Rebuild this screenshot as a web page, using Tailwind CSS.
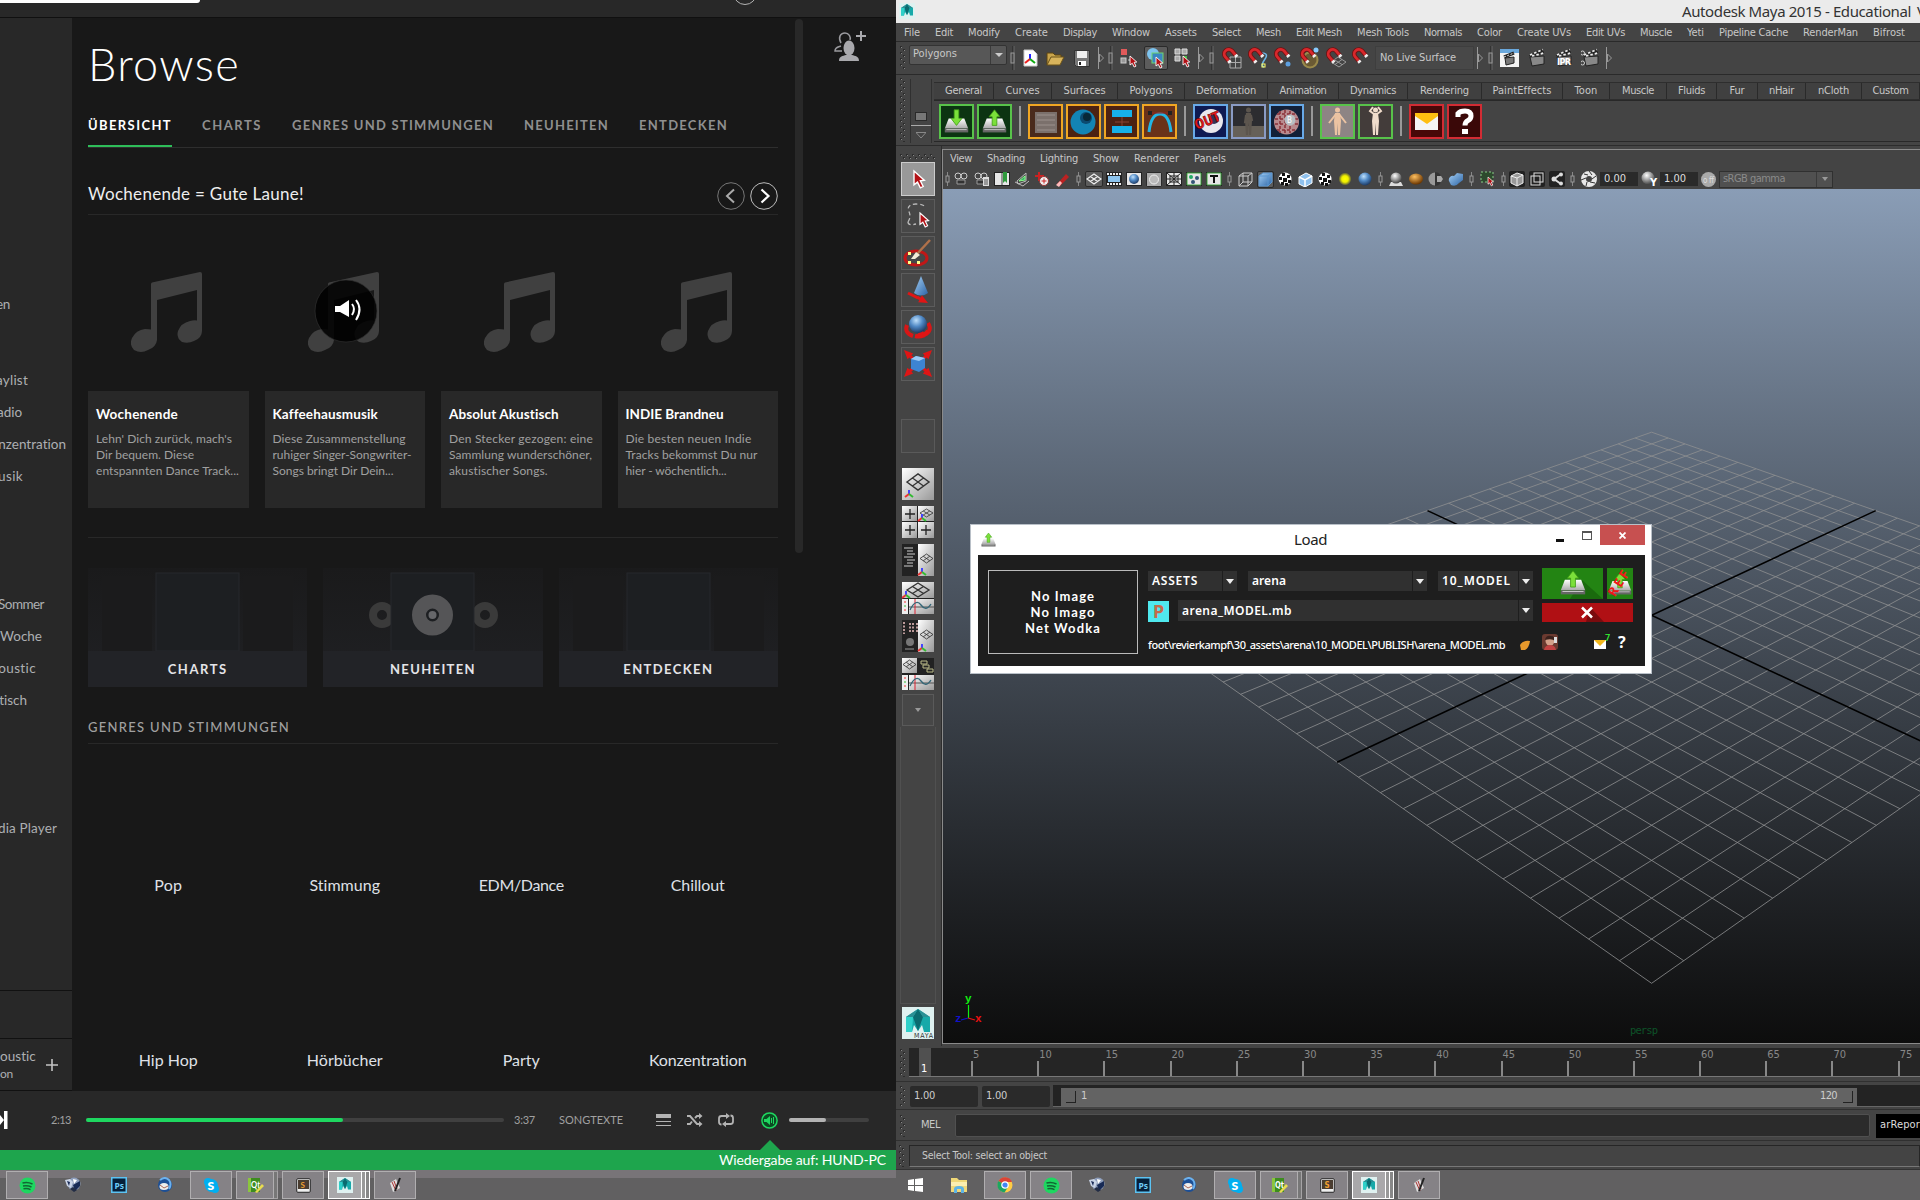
<!DOCTYPE html>
<html lang="de">
<head>
<meta charset="utf-8">
<title>Desktop</title>
<script src="https://cdn.jsdelivr.net/npm/@tailwindcss/browser@4"></script>
</head>
<body class="w-[1920px] h-[1200px] overflow-hidden bg-[#181818] flex whitespace-nowrap">

<!-- music player -->
<div class="w-[896px] h-[1200px] flex flex-col shrink-0 overflow-hidden font-['Lato',sans-serif] text-[#dfe0e6]">
  <header class="h-[18px] shrink-0 bg-[#282828] border-b border-[#101010] flex items-start overflow-hidden">
    <div class="w-[200px] h-[3px] bg-white rounded-br-lg"></div>
    <div class="ml-[533px] -mt-[19px] size-6 rounded-full border border-[#b3b3b3] shrink-0"></div>
  </header>
  <div class="h-[1073px] flex shrink-0">
    <aside class="w-[72px] bg-[#282828] flex flex-col text-[13.5px] text-[#adafb2] leading-8 overflow-hidden shrink-0">
      <div class="mt-[270px] w-[10px] flex justify-end"><span data-w="14">en</span></div>
      <div class="mt-[44px] w-[28px] flex justify-end"><span data-w="32">aylist</span></div>
      <div class="w-[22px] flex justify-end"><span data-w="25">adio</span></div>
      <div class="w-[66px] flex justify-end"><span data-w="68">nzentration</span></div>
      <div class="w-[23px] flex justify-end"><span data-w="25">usik</span></div>
      <div class="mt-[96px] w-[44px] flex justify-end"><span data-w="46">Sommer</span></div>
      <div class="w-[42px] flex justify-end"><span data-w="42">Woche</span></div>
      <div class="w-[36px] flex justify-end"><span data-w="38">oustic</span></div>
      <div class="w-[27px] flex justify-end"><span data-w="28">tisch</span></div>
      <div class="mt-[96px] w-[57px] flex justify-end"><span data-w="59">dia Player</span></div>
      <div class="mt-[146px] h-[48px] border-t border-[#111] shrink-0"></div>
      <div class="h-[53px] border-y border-[#111] flex items-center shrink-0">
        <div class="w-[36px] flex flex-col items-start leading-[17px]"><span data-w="36">oustic</span><span class="text-xs leading-[17px]" data-w="13">on</span></div>
        <svg class="size-3 ml-[10px]" viewBox="0 0 12 12"><path d="M6 0v12M0 6h12" stroke="#c4c4c4" stroke-width="1.6"/></svg>
      </div>
    </aside>
    <main class="w-[723px] pl-4 shrink-0">
      <h1 class="mt-[18px] h-[57px] leading-[57px] text-[45px] text-white"><span class="font-light" data-w="152">Browse</span></h1>
      <nav class="mt-[20px] h-[35px] w-[690px] border-b border-[#2e2e2e] flex gap-[30px] text-[13px] font-bold text-[#8f8f8f]">
        <div class="h-[34px] border-b-2 border-[#2ebd59] text-white leading-6 w-[84px]"><span data-w="84">ÜBERSICHT</span></div>
        <div class="leading-6 w-[60px]"><span data-w="60">CHARTS</span></div>
        <div class="leading-6 w-[202px]"><span data-w="202">GENRES UND STIMMUNGEN</span></div>
        <div class="leading-6 w-[85px]"><span data-w="85">NEUHEITEN</span></div>
        <div class="leading-6"><span data-w="89">ENTDECKEN</span></div>
      </nav>
      <div class="h-[67px] w-[690px] border-b border-[#282828] flex items-center gap-[5px] pt-[29px]">
        <div class="mr-auto text-[17px] leading-6 -mt-[3px] text-[#eee]"><span data-w="216">Wochenende = Gute Laune!</span></div>
        <svg class="size-7" viewBox="0 0 28 28" fill="none"><circle cx="14" cy="14" r="13.3" stroke="#777"/><path d="M17 7.500l-7 6.500 7 6.500" stroke="#aaa" stroke-width="2"/></svg>
        <svg class="size-7" viewBox="0 0 28 28" fill="none"><circle cx="14" cy="14" r="13.3" stroke="#bbb"/><path d="M11.500 7.500l7 6.500-7 6.500" stroke="#fff" stroke-width="2.200"/></svg>
      </div>
      <div id="albums" class="mt-4 h-[307px] w-[690px] border-b border-[#282828] grid grid-cols-4 gap-x-4"></div>
      <div class="mt-[30px] w-[690px] h-[119px] grid grid-cols-3 gap-4 text-[13px] font-bold text-[#e4e4e8]" id="tiles"></div>
      <div class="mt-[28px] h-[29px] w-[690px] border-b border-[#282828] text-[13px] font-medium text-[#a0a0a0] leading-6"><span data-w="202">GENRES UND STIMMUNGEN</span></div>
      <div class="w-[690px] grid grid-cols-4 gap-x-4 text-base text-center text-[#dfe0e6]">
        <div class="h-[175px] pt-[129px]"><span data-w="28">Pop</span></div>
        <div class="h-[175px] pt-[129px]"><span data-w="71">Stimmung</span></div>
        <div class="h-[175px] pt-[129px]"><span data-w="85">EDM/Dance</span></div>
        <div class="h-[175px] pt-[129px]"><span data-w="54">Chillout</span></div>
        <div class="pt-[129px]"><span data-w="59">Hip Hop</span></div>
        <div class="pt-[129px]"><span data-w="76">Hörbücher</span></div>
        <div class="pt-[129px]"><span data-w="37">Party</span></div>
        <div class="pt-[129px]"><span data-w="98">Konzentration</span></div>
      </div>
    </main>
    <div class="w-2 h-[534px] mt-px bg-[#282828] rounded-full shrink-0"></div>
    <svg class="mt-3 ml-[30px] w-[34px] h-[32px]" viewBox="0 0 34 32"><path d="M8 13C5 8 7 3 12 3c4 0 6 4 5 7" fill="none" stroke="#9a9a9e" stroke-width="1.500"/><path d="M8 16c-3 1-6 1-6 5h7" fill="none" stroke="#9a9a9e" stroke-width="1.500"/><ellipse cx="16" cy="18" rx="5.500" ry="7.500" fill="#a9a9ad"/><path d="M6 31c0-5 4-5 7-6h6c3 1 7 1 7 6z" fill="#a9a9ad"/><path d="M28 1v10M23 6h10" stroke="#a9a9ad" stroke-width="2"/></svg>
  </div>
  <footer class="h-[59px] pb-px bg-[#282828] shrink-0 flex items-center text-xs text-[#a0a0a0]">
    <svg class="w-2 h-[18px]" viewBox="0 0 8 18"><path d="M0 4l4 5-4 5zM4 0h3.500v18H4z" fill="#fff"/></svg>
    <div class="ml-[43px] w-[35px] text-[#a0a0a0] text-[11px]"><span data-w="20">2:13</span></div>
    <div class="w-[418px] h-1 rounded-full bg-[#404040]"><div class="w-[257px] h-1 rounded-full bg-[#1ed760]"></div></div>
    <div class="ml-[10px] w-[45px] text-[11px]"><span data-w="21">3:37</span></div>
    <div class="w-[97px] text-[11px]"><span data-w="64">SONGTEXTE</span></div>
    <svg class="w-[15px] h-3" viewBox="0 0 15 12"><path d="M0 2h15" stroke="#b3b3b3" stroke-width="4"/><path d="M0 7.500h15M0 11.500h15" stroke="#b3b3b3"/></svg>
    <svg class="ml-4 w-[16px] h-[14px]" viewBox="0 0 16 14" fill="none"><path d="M0 3h3l7 8h4M0 11h3l2-2.500M8 5l2-2h4" stroke="#b3b3b3" stroke-width="2"/><path d="M12 0l3.500 3L12 6zM12 8l3.500 3-3.500 3z" fill="#b3b3b3"/></svg>
    <svg class="ml-[15px] w-[16px] h-[14px]" viewBox="0 0 16 14" fill="none"><path d="M3.500 11.500Q1 11.500 1 9V5.500Q1 3 3.500 3H9M12.500 2.500Q15 2.500 15 5v3.500Q15 11 12.500 11H7" stroke="#b3b3b3" stroke-width="1.800"/><path d="M8 0l4 3-4 3zM8 8l-4 3 4 3z" fill="#b3b3b3"/></svg>
    <svg class="ml-[27px] size-[17px]" viewBox="0 0 17 17" fill="none"><circle cx="8.500" cy="8.500" r="7.600" fill="#0c4a22" stroke="#1ed760" stroke-width="1.500"/><path d="M3 7h2.500L9 4v9L5.500 10H3z" fill="#1ed760"/><path d="M10.500 6v5M12.500 5v7" stroke="#1ed760"/></svg>
    <div class="ml-[11px] w-[80px] h-1 rounded-full bg-[#404040]"><div class="w-[37px] h-1 rounded-full bg-[#b3b3b3]"></div></div>
  </footer>
  <div class="relative h-5 bg-[#1ea54d] shrink-0 flex justify-end items-center pr-[10px] text-sm text-white">
    <svg class="absolute left-[760px] -top-[10px] w-5 h-[10px]" viewBox="0 0 20 10"><path d="M0 10L10 0l10 10z" fill="#1ea54d"/></svg>
    <span class="leading-5" data-w="167">Wiedergabe auf: HUND-PC</span>
  </div>
  <div class="h-[30px] shrink-0 bg-[#616061]">
    <div class="h-[30px] bg-linear-to-b from-[#787478] from-[27%] to-[#616061] to-[27%] flex items-start pt-px pl-[6px] gap-1" id="task-left"></div>
  </div>
</div>

<!-- 3D application -->
<div class="w-[1024px] h-[1200px] flex flex-col shrink-0 overflow-hidden bg-[#444] font-['DejaVu_Sans_Condensed','DejaVu_Sans',sans-serif] text-[11px] text-[#c8c8c8]">
  <div class="h-[23px] bg-[#ebebeb] flex items-center shrink-0">
    <svg class="ml-[3px] w-4 h-4 -mt-px shrink-0" viewBox="0 0 32 32"><use href="#maya"/></svg>
    <div class="ml-[767px] text-[15px] text-[#333] font-['Noto_Sans',sans-serif] flex gap-[6px]"><span class="shrink-0" data-w="229">Autodesk Maya 2015 - Educational</span><span>V</span></div>
  </div>
  <div id="menu" class="h-[19px] border-b border-[#2a2a2a] flex items-center gap-[15px] pl-2 pt-[2px] shrink-0"></div>
  <div class="h-[33px] border-b border-[#2a2a2a] flex items-center shrink-0">
    <div class="w-[13px] flex justify-center"><svg class="w-[6px] h-6"><use href="#grip"/></svg></div>
    <div class="-mt-[7px] w-[98px] h-5 bg-[#575757] border border-[#333] rounded-xs flex items-center"><span class="ml-[3px]" data-w="44">Polygons</span><span class="ml-auto w-4 h-[18px] border-l border-[#3a3a3a] flex items-center justify-center"><svg class="w-2 h-1"><path d="M0 0h8L4 4z" fill="#ccc"/></svg></span></div>
    <div id="status-a" class="flex items-center h-8"></div>
    <div class="w-[99px] h-6 bg-[#484848] border border-[#3e3e3e] flex items-center pl-1"><span data-w="76">No Live Surface</span></div>
    <div id="status-b" class="flex items-center h-8"></div>
  </div>
  <div class="h-[71px] border-b border-[#2c2c2c] flex shrink-0">
    <div class="w-[14px] shrink-0 flex justify-center pt-[3px]"><svg class="w-[6px] h-[64px]"><use href="#grip"/></svg></div>
    <div class="w-[22px] shrink-0 mt-1 h-[64px] border-x border-[#303030] flex flex-col items-center"><div class="mt-[33px] w-3 h-[9px] bg-[#777] border border-[#2a2a2a]"></div><div class="mt-1 w-5 h-px bg-[#aaa]"></div><svg class="mt-[6px] w-[10px] h-[6px]"><path d="M0 .5h10L5 6z" fill="none" stroke="#888"/></svg></div>
    <div class="flex flex-col w-[986px] ml-[2px] shrink-0">
      <div id="shelf-tabs" class="mt-[7px] h-[18px] flex border-y border-[#2e2e2e] bg-[#404040] w-[986px] overflow-hidden"></div>
      <div id="shelf" class="h-[42px] border-y border-[#282828] flex items-center gap-[3px] pl-[5px]"></div>
    </div>
  </div>
  <div class="h-[900px] flex shrink-0">
    <div class="w-[46px] border-r border-[#2d2d2d] flex flex-col items-center pr-px shrink-0">
      <svg class="mt-2 w-[36px] h-[6px] shrink-0"><use href="#griph"/></svg>
      <div id="tools" class="mt-[2px] flex flex-col gap-[3px]"></div>
      <div class="mt-[38px] size-[34px] border border-[#5a5a5a] bg-[#474747]"></div>
      <div id="layouts" class="mt-[15px] flex flex-col gap-[6px]"></div>
      <div class="mt-1 w-[32px] h-[32px] border border-[#5a5a5a] bg-[#474747] flex items-center justify-center"><svg class="w-[6px] h-1"><path d="M0 0h6L3 4z" fill="#999"/></svg></div>
      <div class="mt-px w-[36px] h-[277px] border border-[#505050] border-t-0"></div>
      <svg class="mt-[3px] size-8 shrink-0" viewBox="0 0 32 32"><use href="#maya"/><text x="12" y="31" font-size="7" textLength="19" fill="#333">MAYA</text></svg>
    </div>
    <div class="mt-[3px] w-[978px] h-[895px] border-l border-t border-b border-[#8a8a8a] flex flex-col shrink-0 overflow-hidden">
      <div id="panel-menu" class="h-[19px] flex items-center gap-[15px] pl-[7px] shrink-0"></div>
      <div id="panel-bar" class="h-[20px] flex items-center shrink-0"></div>
      <div class="relative flex-1 bg-linear-to-b from-[#8a9db6] to-[#0d0d0d]">
        <svg id="viewport" class="block" width="977" height="854" viewBox="943 189 977 854"></svg>

        <!-- floating load dialog -->
        <div class="absolute left-[27px] top-[335px] w-[682px] h-[150px] bg-white border border-[#b9c0c8] font-['Noto_Sans',sans-serif] text-white">
          <div class="h-[30px] flex text-black">
            <svg class="ml-[10px] mt-[7px] w-[15px] h-4" viewBox="0 0 32 32"><use href="#driveup"/></svg>
            <div class="ml-[298px] text-[15px] leading-[29px] text-[#222] w-[34px]"><span data-w="33">Load</span></div>
            <div class="ml-[228px] mt-[14px] w-2 h-[3px] bg-[#111]"></div>
            <div class="ml-[18px] mt-[6px] w-[10px] h-[9px] border border-t-2 border-[#555]"></div>
            <div class="ml-[8px] w-[45px] h-5 bg-[#c75050] text-white flex items-center justify-center"><svg class="size-[7px]"><path d="M.5.5l6 6m0-6l-6 6" stroke="#fff" stroke-width="1.800"/></svg></div>
          </div>
          <div class="ml-[7px] w-[667px] h-[111px] bg-[#1e1e1e] flex text-[13px] font-medium">
            <div class="ml-[10px] mt-[15px] w-[150px] shrink-0 h-[84px] border border-[#bbb] flex flex-col items-center justify-center text-[13px] leading-4 font-bold font-['Lato',sans-serif]"><span data-w="64">No Image</span><span data-w="65">No Imago</span><span data-w="76">Net Wodka</span></div>
            <div class="ml-[10px] w-[385px] shrink-0 pt-4 flex flex-col">
              <div class="flex gap-[11px] h-5">
                <div class="w-[89px] h-5 bg-[#303030] flex items-center"><span class="ml-1 font-semibold text-[12px]" data-w="46">ASSETS</span><span class="drop"></span></div>
                <div class="w-[179px] h-5 bg-[#303030] flex items-center"><span class="ml-1 font-semibold text-[12px]" data-w="34">arena</span><span class="drop"></span></div>
                <div class="w-[95px] h-5 bg-[#303030] flex items-center"><span class="ml-1 font-semibold text-[12px]" data-w="69">10_MODEL</span><span class="drop"></span></div>
              </div>
              <div class="mt-[9px] flex gap-[9px] h-[22px]">
                <div class="w-[21px] h-[21px] mt-px bg-[#4fe8ee] text-[#c4694a] font-bold text-[18px] leading-[21px] text-center">P</div>
                <div class="w-[355px] h-[21px] bg-[#303030] flex items-center"><span class="ml-1 font-semibold text-[12px]" data-w="110">arena_MODEL.mb</span><span class="drop"></span></div>
              </div>
              <div class="mt-[11px] flex items-center text-[11px] h-6"><span class="shrink-0" data-w="357">foot\revierkampf\30_assets\arena\10_MODEL\PUBLISH\arena_MODEL.mb</span>
                <svg class="ml-[14px] w-[12px] h-[12px] shrink-0" viewBox="0 0 12 12"><path d="M1 6q3-5 10-4-1 7-5 9l-4 0z" fill="#e89a2c"/></svg></div>
            </div>
            <div class="ml-[9px] pt-[13px] w-[91px] shrink-0">
              <div class="flex gap-1 h-[31px]">
                <svg class="w-[61px] h-[31px]" viewBox="0 0 61 31"><path d="M0 0h61v31H0z" fill="#238413"/><path d="M40 12l21 19H28z" fill="#1a6a0d"/><svg x="18" y="2" width="26" height="26" viewBox="0 0 32 32"><use href="#driveup"/></svg></svg>
                <svg class="w-[26px] h-[31px]" viewBox="0 0 26 31"><path d="M0 0h26v31H0z" fill="#238413"/><svg x="1" y="3" width="24" height="26" viewBox="0 0 32 32"><use href="#driveup"/></svg><text transform="rotate(-58 7 29)" x="7" y="30" font-size="13" font-weight="700" fill="#f01818" textLength="28">REF</text></svg>
              </div>
              <svg class="mt-1 w-[91px] h-[19px]" viewBox="0 0 91 19"><path d="M0 0h91v19H0z" fill="#b01014"/><path d="M48 4l14 15H44z" fill="#7a0b0e"/><path d="M40 4.500l10 10m0-10l-10 10" stroke="#fff" stroke-width="2.500"/></svg>
              <div class="mt-[10px] flex items-center h-5">
                <svg class="w-4 h-4" viewBox="0 0 16 16"><rect width="16" height="16" rx="3" fill="#6b3a30"/><circle cx="8" cy="7" r="4.500" fill="#d3a18a"/><path d="M3 6q1-5 6-4 4 0 4 5-3-3-10-1z" fill="#3a211c"/><path d="M2 16q1-5 6-5t6 5z" fill="#c24343"/><path d="M12 3h3v6h-3z" fill="#ddd"/></svg>
                <svg class="ml-[36px] w-[18px] h-[18px]" viewBox="0 0 18 18"><path d="M0 7h12v9H0z" fill="#fff"/><path d="M0 7h12l-6 6z" fill="#f2b71c"/><text x="11" y="8" font-size="9" fill="#3f3">7</text></svg>
                <span class="ml-[6px] text-base font-bold leading-5">?</span>
              </div>
            </div>
          </div>
        </div>
      </div>
    </div>
  </div>
  <div class="h-[36px] pt-[2px] border-b border-[#303030] flex shrink-0">
    <div class="w-[13px] flex justify-center pt-px"><svg class="w-[6px] h-[28px]"><use href="#grip"/></svg></div>
    <div id="timeline" class="h-[29px] w-[1011px] bg-[#252525] border-b border-[#777] flex overflow-hidden text-[#888]">
      <div class="w-[62px] shrink-0 flex"><div class="ml-[10px] w-3 h-[28px] bg-[#505050] text-white pt-[15px] pl-[2px] leading-3">1</div></div>
    </div>
  </div>
  <div class="h-[28px] pt-px border-b border-[#303030] flex items-center shrink-0 text-[#ccc]">
    <div class="w-[14px] flex justify-center"><svg class="w-[6px] h-[20px]"><use href="#grip"/></svg></div>
    <div class="w-[68px] h-[21px] bg-[#2a2a2a] rounded-xs flex items-center pl-1"><span data-w="21">1.00</span></div>
    <div class="ml-1 w-[68px] h-[21px] bg-[#2a2a2a] rounded-xs flex items-center pl-1"><span data-w="21">1.00</span></div>
    <div class="ml-[3px] w-[867px] h-[22px] bg-[#232323] border-b border-[#666] flex items-center pl-2">
      <div class="w-[796px] h-[18px] mt-[2px] bg-[#636363] flex items-center justify-between pl-[5px] pr-1">
        <div class="flex items-center gap-[5px]"><div class="w-[10px] h-3 border-r border-b border-[#222]"></div><span>1</span></div>
        <div class="flex items-center gap-[6px]"><span data-w="17">120</span><div class="w-[10px] h-3 border-r border-b border-[#222]"></div></div>
      </div>
    </div>
  </div>
  <div class="h-[31px] pt-px border-b border-[#303030] flex items-center shrink-0">
    <div class="w-[14px] flex justify-center"><svg class="w-[6px] h-[22px]"><use href="#grip"/></svg></div>
    <div class="w-[45px] pl-[11px]"><span data-w="19">MEL</span></div>
    <div class="w-[917px] h-[23px] bg-[#2b2b2b] border border-[#505050] rounded-xs"></div>
    <div class="ml-[6px] w-[44px] h-[24px] bg-black flex items-center pl-1 text-[#ddd]"><span data-w="40">arRepor</span></div>
  </div>
  <div class="h-[28px] flex items-center shrink-0 pt-px">
    <div class="w-[13px] flex justify-center"><svg class="w-[6px] h-[22px]"><use href="#grip"/></svg></div>
    <div class="w-[1013px] h-[22px] border border-[#262626] border-b-[#777] flex items-center pl-3 text-[10.5px]"><span data-w="125">Select Tool: select an object</span></div>
  </div>
  <div id="task-right" class="h-[31px] bg-[#616061] border-t border-[#333] flex items-start pt-px gap-1 shrink-0"></div>
</div>

<!-- shared symbols -->
<svg width="0" height="0" class="absolute">
  <defs>
    <pattern id="dots" width="6" height="6" patternUnits="userSpaceOnUse"><path d="M0 0h2v2H0zM3 3h2v2H3z" fill="#2c2c2c"/><path d="M1 1h1v1H1zM4 4h1v1H4z" fill="#888"/></pattern>
    <linearGradient id="metal" x2="0" y2="1"><stop stop-color="#fff"/><stop offset="1" stop-color="#aaa"/></linearGradient>
    <radialGradient id="blue" cx=".4" cy=".3" r=".7"><stop stop-color="#bfe0fb"/><stop offset=".5" stop-color="#4f88c4"/><stop offset="1" stop-color="#1e3c66"/></radialGradient>
    <radialGradient id="gray" cx=".4" cy=".3" r=".7"><stop stop-color="#fff"/><stop offset="1" stop-color="#444"/></radialGradient>
    <radialGradient id="gold" cx=".4" cy=".3" r=".7"><stop stop-color="#ffc060"/><stop offset="1" stop-color="#6a3500"/></radialGradient>
    <radialGradient id="sun"><stop stop-color="#ff0"/><stop offset=".5" stop-color="#ee0"/><stop offset="1" stop-color="#ee0" stop-opacity="0"/></radialGradient>
    <linearGradient id="cube" x2="1" y2="1"><stop stop-color="#a5d0f5"/><stop offset="1" stop-color="#2c64a5"/></linearGradient>
    <linearGradient id="pane" x2="1" y2="1"><stop stop-color="#fff"/><stop offset="1" stop-color="#999"/></linearGradient>
  </defs>
  <symbol id="grip" overflow="hidden"><rect width="6" height="100" fill="url(#dots)"/></symbol>
  <symbol id="griph" overflow="hidden"><rect width="100" height="6" fill="url(#dots)"/></symbol>
  <symbol id="maya" viewBox="0 0 32 32"><path d="M0 0h32v32H0z" fill="#dff1f0"/><path d="M4 10L16 2l12 8v15h-6l-2-7-4 6-4-6-2 7H4z" fill="#17a9a9"/><path d="M16 2l-5 8 5 14 5-14z" fill="#0b6b70"/><path d="M4 10l7 0 5-8zM28 10h-7l-5-8z" fill="#2b8f94"/><path d="M4 10h7l-1 15H4z" fill="#2fd0c9"/></symbol>
  <symbol id="drive" viewBox="0 0 32 32"><path d="M6 12h20l5 13H1z" fill="url(#metal)"/><path d="M1 25h30v5H1z" fill="#666"/><path d="M3 26h26v1H3z" fill="#ddd"/></symbol>
  <symbol id="driveup" viewBox="0 0 32 32"><use href="#drive"/><path d="M16 1l7 9h-4v11h-6V10H9z" fill="#7be03a" stroke="#3d9a16"/></symbol>
  <symbol id="drivedown" viewBox="0 0 32 32"><use href="#drive"/><path d="M16 21l7-9h-4V1h-6v11H9z" fill="#7be03a" stroke="#3d9a16"/></symbol>
</svg>

<script>
const $ = id => document.getElementById(id);
const svg = (w, h, body, vb) => `<svg width="${w}" height="${h}" viewBox="${vb || `0 0 ${w} ${h}`}" fill="none">${body}</svg>`;
const cur = (x, y, s = 1) => `<path transform="translate(${x} ${y}) scale(${s})" d="M0 0l9 8-3.500.5 2.500 5-2.500 1.200-2.500-5L0 12z" fill="#b31015" stroke="#fff" stroke-width="1.200"/>`;
const magnet = e => svg(24, 24, e + `<g transform="rotate(-40 9 9)"><path d="M5 14V8a4.500 4.500 0 0 1 9 0v6" stroke="#701010" stroke-width="4.400"/><path d="M5 13V8a4.500 4.500 0 0 1 9 0v5" stroke="#d8282c" stroke-width="2.800"/><path d="M5 13v2.500M14 13v2.500" stroke="#eee" stroke-width="3.500"/></g>`);
const clap = e => svg(20, 20, `<path d="M3 9l14-1v8l-12 2z" fill="#888" stroke="#222"/><path d="M2 7l14-6 1 4-14 4z" fill="#222"/><path d="M3 7l13-5.500M5 8l12-3" stroke="#eee" stroke-width="1.800" stroke-dasharray="2.500 2"/>` + e);
const vsep = svg(6, 24, '<path d="M3 0v24" stroke="#222"/><path d="M4 0v24" stroke="#666"/><rect x="1" y="7" width="3" height="10" stroke="#999" fill="#444"/>');
const asep = svg(8, 22, '<path d="M1.500 0v22" stroke="#999"/><path d="M2.500 7l4 4-4 4z" stroke="#999"/>');
const psep = svg(5, 14, '<path d="M2.500 0v14" stroke="#888"/><rect x="1" y="4" width="3" height="6" stroke="#999" fill="#444"/>');
const ball = g => svg(14, 14, `<circle cx="7" cy="7" r="6.500" fill="url(#${g})"/>`);
const box3 = (f, s) => svg(15, 15, `<path d="M1 4l4-3h9v9l-4 4H1z" fill="${f}" stroke="${s}"/><path d="M1 4h9v10M10 4l4-3" stroke="${s}"/>`);
const sq = b => svg(16, 15, `<rect x=".5" y=".5" width="15" height="13" fill="#e6e6e6" stroke="#222"/>` + b);
const check = svg(14, 14, '<circle cx="7" cy="7" r="6.500" fill="#fff"/><path d="M4 1h3v3H4zM9 3h3v3H9zM1 5h3v3H1zM5 6h4v4H5zM10 8h3v3h-3zM3 10h3v3H3zM7 11h3v3H7z" fill="#111"/>');
const perspGrid = (x, y, w, h) => `<path transform="translate(${x} ${y}) scale(${w / 24} ${h / 16})" d="M0 8L12 0l12 8-12 8zM6 4l12 8M18 4L6 12" stroke="#333" stroke-width="1.500"/>`;
const axes = (x, y) => `<path d="M${x} ${y}v-4" stroke="#44f" stroke-width="2"/><path d="M${x} ${y}l-4 3" stroke="#e33" stroke-width="2"/><path d="M${x} ${y}l4 3" stroke="#3b3" stroke-width="2"/>`;

// centred cells of a toolbar: [width, markup, pressed]
const cells = (id, list) => { $(id).innerHTML = list.map(([w, m, on]) => `<div class="flex items-center justify-center shrink-0 h-full" style="width:${w}px"><div class="${on ? 'bg-[#5c5c5c] border border-[#2a2a2a] rounded-xs' : ''}">${m}</div></div>`).join(''); };
const labels = (id, list) => { $(id).innerHTML = list.map(([t, w]) => `<div class="shrink-0" style="width:${w}px"><span data-w="${w}">${t}</span></div>`).join(''); };

labels('menu', [['File',16],['Edit',18],['Modify',32],['Create',33],['Display',34],['Window',38],['Assets',32],['Select',29],['Mesh',25],['Edit Mesh',46],['Mesh Tools',52],['Normals',38],['Color',25],['Create UVs',54],['Edit UVs',39],['Muscle',32],['Yeti',17],['Pipeline Cache',69],['RenderMan',55],['Bifrost',32]]);
labels('panel-menu', [['View',22],['Shading',38],['Lighting',38],['Show',26],['Renderer',45],['Panels',32]]);

cells('status-a', [
  [11, vsep],
  [24, svg(15,18,'<path d="M1 1h9l4 4v12H1z" fill="#fff" stroke="#ccc"/><path d="M7 10V5" stroke="#22f" stroke-width="2"/><path d="M7 10l-5 4" stroke="#e22" stroke-width="2"/><path d="M7 10l5 4" stroke="#1a1" stroke-width="2"/>')],
  [26, svg(19,15,'<path d="M1 14V2h6l2 2h6v3" fill="#c9a54c" stroke="#5c4510"/><path d="M1 14l4-8h13l-4 8z" fill="#d8b45c" stroke="#6b5218"/>')],
  [28, svg(16,17,'<path d="M.5.5h15v16h-13l-2-2z" fill="#777" stroke="#333"/><path d="M3 1h10v7H3z" fill="#eee"/><path d="M4 11h8v5H4z" fill="#fff"/><path d="M5 12h2v3H5z" fill="#222"/>')],
  [10, asep], [10, vsep],
  [28, svg(20,20,'<rect x="1" y="1" width="6" height="6" fill="#e05a5a"/><rect x="1" y="10" width="5" height="5" fill="#999" stroke="#ccc"/><path d="M8 12h5" stroke="#bbb"/>' + cur(10,8,.75))],
  [24, svg(22,22,'<circle cx="8" cy="7" r="6" fill="#7dc3ee"/><rect x="7" y="6" width="11" height="10" fill="#3b86c2" stroke="#6fd46f"/>' + cur(11,10,.75)), 1],
  [29, svg(20,20,'<path d="M2 1h5v5H2zM9 1h5v5H9zM2 8h5v5H2z" fill="#aaa" stroke="#ddd"/><path d="M10 8h4v4h-4z" fill="#4b4"/>' + cur(10,8,.75))],
  [8, asep], [14, vsep],
  [26, magnet('<path d="M10 11h11v11H10zM10 16.500h11M15.500 11v11" stroke="#aaa"/>')],
  [26, magnet('<path d="M12 7q12-1 7 6t-1 8" stroke="#6db5e5" stroke-width="1.500"/><rect x="16" y="18" width="3" height="3" stroke="#ff6"/>')],
  [26, magnet('<circle cx="16" cy="18" r="2.500" fill="#5c9fe0"/>')],
  [26, magnet('<circle cx="12" cy="14" r="7.500" fill="#6a5a34" stroke="#9a8a4a" stroke-width="2"/><circle cx="18" cy="4" r="2.500" fill="#8cf"/>')],
  [26, magnet('<path d="M7 16l7-5 8 5-7 5zM10 13.500l8 5M18 13.500l-7 5" stroke="#999"/>')],
  [26, magnet('')]
]);
cells('status-b', [
  [12, asep], [9, vsep],
  [29, svg(19,19,'<path d="M0 0h19v18H0z" fill="#f4f4f4"/><path d="M0 0h19v4H0z" fill="#6aa8dc"/><path d="M5 9l9-1v6l-8 2z" fill="#777" stroke="#222"/><path d="M4 8l10-4" stroke="#222" stroke-width="3"/><path d="M4 8l10-4" stroke="#ddd" stroke-dasharray="2 1.500"/>')],
  [26, clap('')],
  [27, clap('<text x="3" y="17" font-size="9" font-weight="bold" fill="#fff" textLength="14">IPR</text>')],
  [27, clap('<circle cx="1.500" cy="5" r="2" stroke="#ccc"/><circle cx="1.500" cy="15" r="2" stroke="#ccc"/>')],
  [10, asep]
]);

const cam = '<circle cx="4" cy="4" r="3" stroke="#ccc"/><circle cx="10" cy="4" r="3" stroke="#ccc"/><path d="M3 8h8v4H3z" fill="#333" stroke="#999"/>';
$('panel-bar').innerHTML = '<div id="pb" class="flex h-5 items-center"></div>' +
  '<div class="w-[38px] h-[14px] bg-[#2a2a2a] pl-1 leading-[14px] text-[#ddd]"><span data-w="22">0.00</span></div>' +
  `<div class="w-[22px] flex justify-center">${svg(17,16,'<circle cx="7" cy="7" r="6.500" fill="url(#gray)"/><text x="9" y="15" font-size="11" font-weight="700" fill="#fff">Y</text>')}</div>` +
  '<div class="w-[38px] h-[14px] bg-[#2a2a2a] pl-1 leading-[14px] text-[#ddd]"><span data-w="22">1.00</span></div>' +
  `<div class="w-[21px] flex justify-center">${svg(15,15,'<circle cx="7.500" cy="7.500" r="7.500" fill="#aaa"/><text x="2" y="10.500" font-size="8" fill="#ddd" textLength="11">off</text>')}</div>` +
  '<div class="w-[114px] h-[17px] border border-[#303030] bg-[#505050] flex items-center pl-[3px] text-[#8a8a8a]"><span data-w="62">sRGB gamma</span><span class="ml-auto w-4 h-[15px] border-l border-[#3a3a3a] flex items-center justify-center"><svg class="w-[6px] h-1"><path d="M0 0h6L3 4z" fill="#999"/></svg></span></div>';
cells('pb', [
  [9, psep],
  [20, svg(16,14,cam)], [20, svg(16,14,cam + '<path d="M9 5h6v9H9z" fill="#ddd"/><path d="M10 8h4M10 10h4M10 12h4" stroke="#555"/>')],
  [20, sq('<path d="M8 1v12" stroke="#444"/><path d="M9 0h4v11l-2-2-2 2z" fill="#2f9a3c"/>')],
  [20, svg(16,15,'<path d="M1 10l8 4 6-5M3 9L12 1v8l-8 3z" stroke="#bbb"/><path d="M5 9l6-5v4z" fill="#3a6" stroke="#8f8"/>')],
  [20, svg(15,15,'<path d="M4 0v9M0 4h9" stroke="#c22" stroke-width="2"/><circle cx="9" cy="9" r="4.500" fill="#eee" stroke="#933"/><path d="M9 6.500v5M6.500 9h5" stroke="#c22"/>')],
  [20, svg(15,15,'<path d="M2 12l9-10 3 3-9 9z" fill="#b22"/><path d="M1 13l4-4 2 2-3 4z" fill="#fbb"/>')],
  [12, psep],
  [20, svg(16,14,'<path d="M1 7l7-5 7 5-7 5zM4.500 4.500l7 5M11.500 4.500l-7 5" stroke="#eee" stroke-width="1.200"/>'), 1],
  [20, sq('<path d="M0 0h16v14H0z" fill="#222"/><path d="M1 2h14M1 12h14" stroke="#eee" stroke-width="2" stroke-dasharray="2 1"/><path d="M2 4h12v6H2z" fill="#8cc4ee"/>')],
  [20, sq('<circle cx="8" cy="7" r="5" fill="url(#blue)"/>')],
  [20, svg(14,13,'<rect width="14" height="13" fill="#aaa"/><circle cx="7" cy="6.500" r="4.500" fill="#bbb" stroke="#eee"/>'), 1],
  [20, sq('<path d="M1 1l14 12M15 1L1 13M8 1v12M1 7h14" stroke="#222"/><rect x="4" y="4" width="8" height="6" stroke="#222"/>')],
  [20, sq('<path d="M1 1h14v12H1z" stroke="#4a4"/><circle cx="5" cy="5" r="2" fill="#2a6"/><circle cx="11" cy="6" r="2" fill="#357"/><circle cx="7" cy="10" r="2" fill="#357"/>')],
  [20, sq('<path d="M1 1h14v12H1z" stroke="#4a4"/><path d="M4 4h8M8 4v7" stroke="#111" stroke-width="2"/>')],
  [11, psep],
  [20, svg(15,15,'<path d="M1 4l4-3h9v9l-4 4H1zM1 4h9v10M10 4l4-3M5 1v9l-4 4M5 10h9" stroke="#ccc"/>')],
  [20, box3('url(#cube)','#5a96d0'), 1],
  [20, check],
  [20, svg(15,15,'<path d="M1 5l7-4 6 3v7l-7 4-6-3z" fill="#8fc1ee" stroke="#fff"/><path d="M1 5l6 3 7-4M7 8v7" stroke="#fff" stroke-width="1.500"/>')],
  [20, check],
  [20, ball('sun')], [20, ball('blue')],
  [11, psep],
  [20, svg(16,15,'<path d="M1 14l2-4h10l2 4z" fill="#ddd"/><circle cx="8" cy="6" r="5.500" fill="url(#gray)"/>')],
  [20, svg(16,12,'<ellipse cx="8" cy="6" rx="7" ry="5.500" fill="url(#gold)"/>')],
  [20, svg(16,14,'<circle cx="7" cy="7" r="6.500" fill="#999"/><path d="M7 0v14a7 7 0 0 0 6-4v-6A7 7 0 0 0 7 0z" fill="#333"/><path d="M9 4h4l2 3-2 3H9z" fill="#aaa"/>')],
  [20, svg(16,14,'<path d="M1 9a4 4 0 0 1 5-5l3-3 6 1v6l-4 3q-3 4-8 2z" fill="url(#cube)"/>')],
  [10, psep],
  [23, svg(16,16,'<rect x="1" y="1" width="12" height="10" fill="#2d4a2d" stroke="#8c8" stroke-dasharray="2 2"/>' + cur(8,6,.6))],
  [8, psep],
  [20, svg(16,16,'<rect width="16" height="16" rx="2" fill="#222"/><path d="M2 5l6-3 6 2v8l-6 3-6-3z" fill="#999" stroke="#eee"/><path d="M2 5l6 2 6-3M8 7v8" stroke="#eee"/>')],
  [20, svg(16,16,'<rect width="16" height="16" rx="2" fill="#222"/><rect x="5" y="2" width="9" height="9" stroke="#ddd"/><rect x="2" y="5" width="9" height="9" stroke="#ddd"/>')],
  [20, svg(16,16,'<rect width="16" height="16" rx="2" fill="#222"/><path d="M12 3L5 8l7 5" stroke="#ddd" stroke-width="2"/><circle cx="5" cy="8" r="2.500" fill="#ddd"/><circle cx="12" cy="3.500" r="2" fill="#ddd"/><circle cx="12" cy="12.500" r="2" fill="#ddd"/>')],
  [11, psep],
  [22, svg(16,16,'<circle cx="8" cy="8" r="5.500" stroke="#e8e8e8" stroke-width="5"/><path d="M8 0l3 4M15 5l-4 3M14 12l-5-1M5 15l1-4M0 9l5-2M3 3l4 1" stroke="#333"/>')]
]);

$('shelf-tabs').innerHTML = [['General',60,37],['Curves',58,34],['Surfaces',66,42],['Polygons',67,43],['Deformation',83,60],['Animation',71,47],['Dynamics',69,46],['Rendering',74,49],['PaintEffects',81,59],['Toon',47,23],['Muscle',57,32],['Fluids',50,27],['Fur',41,15],['nHair',48,25],['nCloth',56,31],['Custom',58,36]]
  .map(([t, w, tw]) => `<div class="shrink-0 border-r border-[#2a2a2a] flex items-center justify-center" style="width:${w}px"><span data-w="${tw}">${t}</span></div>`).join('');

const shelfIcon = (bc, bg, b) => `<svg class="shrink-0" width="35" height="35" viewBox="0 0 35 35" fill="none"><rect x="1" y="1" width="33" height="33" fill="${bg}" stroke="${bc}" stroke-width="2"/>${b}</svg>`;
const bar = '<div class="mx-1 w-[2px] h-[30px] bg-[#999] shrink-0"></div>';
const man = (c, s) => `<circle cx="17.500" cy="6" r="2.500" fill="${c}"/><path d="M15 9h5l1 8-1 14h-2l-.5-12-.5 12h-2l-1-14z" fill="${c}"/><path d="${s}" stroke="${c}" stroke-width="2"/>`;
const G = '#58c24a', O = '#f0a623', B = '#68a9e8', R = '#d22c34';
$('shelf').innerHTML =
  shelfIcon(G,'#0c3412','<svg x="5" y="4" width="25" height="27" viewBox="0 0 32 32"><use href="#drivedown"/></svg>') +
  shelfIcon(G,'#0c3412','<svg x="5" y="4" width="25" height="27" viewBox="0 0 32 32"><use href="#driveup"/></svg>') + bar +
  shelfIcon(O,'#4a2a1c','<rect x="7" y="8" width="22" height="21" fill="#7b706c"/><path d="M9 11h18M9 16h18M9 21h18M9 26h18" stroke="#9c908c"/>') +
  shelfIcon(O,'#4c2212','<circle cx="17" cy="18" r="12.500" fill="#1384b4"/><circle cx="20" cy="14" r="6" fill="#0b4a70"/><circle cx="21" cy="13" r="4" fill="#082838"/>') +
  shelfIcon(O,'#4c2212','<path d="M8 6h20v7H8zM8 22h20v7H8z" fill="#17b1e8"/><path d="M18 13v9M11 18h14" stroke="#843"/>') +
  shelfIcon(O,'#6a3219','<path d="M7 28Q9 10 18 10t11 18" stroke="#22b5e5" stroke-width="3"/><path d="M8 9h20" stroke="#922"/><path d="M6 7h4v4H6zM26 7h4v4h-4z" fill="#222"/>') + bar +
  shelfIcon(B,'#0e1a52','<circle cx="18" cy="17" r="12" fill="#e8e8ee"/><circle cx="21" cy="15" r="5" fill="#335"/><text transform="rotate(-22 4 27)" x="4" y="26" font-size="14" font-weight="900" fill="#e81818" stroke="#500" stroke-width=".5" textLength="27" lengthAdjust="spacingAndGlyphs">OUT</text>') +
  shelfIcon('#8a9bc4','#2c2c30','<path d="M2 22h31v11H2z" fill="#666058"/>' + man('#5c554e','M15 11l-1 7 7-2-1-5')) +
  shelfIcon(B,'#122038','<circle cx="17.500" cy="18" r="12.500" fill="#b98a8e"/><path d="M8 10h19M6 15h23M6 20h23M8 26h19M11 7v22M16 6v25M21 7v22" stroke="#8a3038" stroke-width="1.500" stroke-dasharray="3 2"/><circle cx="21" cy="16" r="5.500" fill="#b8bdc2"/><text x="18" y="19" font-size="8" fill="#fff">B</text>') + bar +
  shelfIcon(G,'#8d8484', man('#ecc3a2','M16 10l-7 9M19 10l7 9')) +
  shelfIcon(G,'#433c3a', man('#f0dccb','M16 10l-4-3 3-4M19 10l4-3-3-4')) + bar +
  shelfIcon(R,'#470808','<path d="M6 9h23v17H6z" fill="#f4f4f4"/><path d="M6 9h23v3l-11 8L6 12z" fill="#ffbe10"/>') +
  shelfIcon(R,'#3a0808','<path d="M11 13V9.500Q13 7 18 7q6 0 6 5 0 3-3 4.500t-3 5" stroke="#fff" stroke-width="5"/><path d="M15 25h6v5h-6z" fill="#fff"/>');

const tool = (b, on) => `<div class="size-[34px] border ${on ? 'bg-[#999] border-[#ccc]' : 'bg-[#474747] border-[#5c5c5c]'}">${svg(32,32,b)}</div>`;
const ra = (x, y, a) => `<path transform="translate(${x} ${y}) rotate(${a})" d="M0 0l-9-4v2.500h-3v3h3V4z" fill="#e01515"/>`;
$('tools').innerHTML =
  tool(cur(12,8,1.15), 1) +
  tool('<path d="M6 22q4-6 0-12 0-6 8-6 9 0 9 4M6 22q0 4 8 2" stroke="#bbb" stroke-width="1.300" stroke-dasharray="4 3"/>' + cur(18,13,.95)) +
  tool('<ellipse cx="14" cy="21" rx="11" ry="7" stroke="#c01717" stroke-width="3"/><path d="M15 17L28 3" stroke="#b0714a" stroke-width="2.500"/><path d="M9 22l5-7 4 3-5 4z" fill="#f2ecd8"/><path d="M6 15h3v3H6zM6 24h3v3H6zM15 24h3v3h-3z" fill="#ff8"/>') +
  tool('<path d="M19 2l7 17q-7 5-14 0z" fill="url(#cube)"/>' + ra(26,29,28) + '<path d="M6 19l10 5" stroke="#e01515" stroke-width="3"/>') +
  tool('<path d="M5 14q-3 8 6 11M26 12q5 8-4 12" stroke="#d81616" stroke-width="4"/>' + ra(13,25,165) + '<path d="M13 25q8 2 13-5" stroke="#e01515" stroke-width="4"/><circle cx="16" cy="13" r="9" fill="url(#blue)"/>') +
  tool(ra(2,2,225) + ra(30,2,-45) + ra(2,29,135) + ra(30,29,45) + '<path d="M9 11l5-3 9 2v10l-6 4-8-3z" fill="#3d84d2"/><path d="M9 11l5-3 9 2-6 3z" fill="#9ccaf5"/>');

const lay = b => svg(32, 32, '<rect width="32" height="32" fill="#222"/>' + b);
const pane = (x, y, w, h) => `<rect x="${x}" y="${y}" width="${w}" height="${h}" fill="url(#pane)"/>`;
const graph = '<rect y="17" width="6" height="15" fill="#eee"/><path d="M2 20h2M2 28h2" stroke="#e33"/><path d="M2 24h2" stroke="#3b3"/>' + pane(7,17,25,15) + '<path d="M7 25h25" stroke="#555"/><path d="M13 17v15" stroke="#d23"/><path d="M8 28q6-12 11-5t10-1" stroke="#367" stroke-width="1.300"/>';
$('layouts').innerHTML =
  lay(pane(0,0,32,32) + perspGrid(5,6,22,16) + axes(7,26)) +
  lay(pane(0,0,15,15) + pane(16,0,16,15) + pane(0,16,15,16) + pane(16,16,16,16) + '<path d="M8 3v10M3 8h10M8 19v10M3 24h10M24 19v10M19 24h10" stroke="#222" stroke-width="1.300"/>' + perspGrid(18,3,13,8) + axes(20,12)) +
  lay('<path d="M2 4h9M5 7h6M5 10h8M2 13h9M5 16h8M5 19h6M2 22h9" stroke="#ccc"/>' + pane(16,0,16,32) + perspGrid(18,10,13,9) + axes(20,28)) +
  lay(pane(0,0,32,16) + perspGrid(5,1,22,14) + axes(4,13) + graph) +
  lay('<path d="M2 2v12M11 3v10M15 3v10M8 3v10" stroke="#b99" stroke-width="2" stroke-dasharray="2 1.500"/><circle cx="8" cy="22" r="4" fill="#777"/><path d="M3 29h9" stroke="#999"/>' + pane(16,0,16,32) + perspGrid(18,10,13,9) + axes(20,28)) +
  lay(pane(0,0,15,15) + perspGrid(1,2,13,9) + '<path d="M19 3h6v3h-6zM21 7h6v3h-6zM25 11h6v3h-6z" stroke="#bb8"/>' + graph);

// perspective ground grid: screen = centre + offset / (1 + k*s)
const project = (u, v) => { const d = 1 + 0.1678 * (u + v); return [(1651.6 + 261.7 * (u - v) / d).toFixed(1), (-113.2 + 728.5 / d).toFixed(1)]; };
let thin = '';
for (let i = -12; i <= 12; i++) {
  if (!i) continue;
  const t = i / 12;
  thin += `M${project(t, -1)}L${project(t, 1)}M${project(-1, t)}L${project(1, t)}`;
}
const axis = `M${project(0, -1)}L${project(0, 1)}M${project(-1, 0)}L${project(1, 0)}`;
$('viewport').innerHTML = `<path d="${thin}" stroke="#8f9091" stroke-opacity=".8" fill="none"/><path d="${axis}" stroke="#000" stroke-width="1.600"/>
  <g fill="none" stroke-width="1.200"><path d="M968.500 1018v-13" stroke="#1e1"/><path d="M968 1018l7 2" stroke="#e11"/><path d="M968 1018l-7 2" stroke="#11c"/></g>
  <g font-family="Liberation Mono" font-size="11" font-weight="bold"><text x="965" y="1002" fill="#1e1">y</text><text x="975" y="1022" fill="#e11">x</text><text x="955" y="1022" fill="#11c">z</text></g>
  <text x="1630" y="1034" font-family="DejaVu Sans Mono" font-size="10.500" fill="#0d5228" textLength="28">persp</text>`;

$('timeline').innerHTML += Array.from({length: 15}, (_, i) => `<div class="shrink-0 w-[66.2px] h-[28px] flex flex-col"><div class="pl-[2px] h-[13px] leading-[13px]">${i * 5 + 5}</div><div class="w-[2px] h-[15px] bg-[#888]"></div></div>`).join('');

// music player content
const note = '<path d="M20 12Q20 11 21 10.500L69 0q2 0 2 2v57a13 11 0 0 1-8 10q-6 3-12 1-6-4-4-11 3-8 12-10 4-1 7-.5V18L26 28v40a14 12 0 0 1-9 10q-7 4-14 0-5-5-2-12 4-8 13-9 4 0 6 .5z" fill="#404040"/>';
$('albums').innerHTML = [
  ['Wochenende', 82, [["Lehn' Dich zurück, mach's",136],['Dir bequem. Diese',98],['entspannten Dance Track...',143]]],
  ['Kaffeehausmusik', 105, [['Diese Zusammenstellung',133],['ruhiger Singer-Songwriter-',139],['Songs bringt Dir Dein...',121]]],
  ['Absolut Akustisch', 110, [['Den Stecker gezogen: eine',144],['Sammlung wunderschöner,',143],['akustischer Songs.',99]]],
  ['INDIE Brandneu', 98, [['Die besten neuen Indie',126],['Tracks bekommst Du nur',132],['hier - wöchentlich...',101]]]
].map(([t, w, ls], i) => `<div class="relative">
  <div class="h-[160px] pl-[43px] pt-[41px]">${svg(72, 81, note)}</div>
  ${i === 1 ? `<div class="absolute left-[49px] top-[48px]">${svg(64,64,'<circle cx="32" cy="32" r="31" fill="#000" fill-opacity=".85" stroke="#333" stroke-opacity=".6"/><path d="M21 27h5l9-6v17l-9-5h-5z" fill="#fff"/><path d="M38 25q4 5 0 11M42 21q7 9 0 20" stroke="#fff" stroke-width="2"/>')}</div>` : ''}
  <div class="h-[117px] bg-[#282828] px-2 pt-[14px]"><div class="text-[13.500px] font-bold text-white leading-[18px] mb-[8px]"><span data-w="${w}">${t}</span></div>${ls.map(([l, lw]) => `<div class="text-xs leading-4 h-4 text-[#a0a0a0]"><span data-w="${lw}">${l}</span></div>`).join('')}</div>
</div>`).join('');
$('tiles').innerHTML = [['CHARTS',60],['NEUHEITEN',86],['ENTDECKEN',90]].map(([t, w], i) => `<div class="flex flex-col bg-linear-to-b from-[#1a1a1b] to-[#202124]">
  <svg width="219" height="83" viewBox="0 0 219 83" fill="none">${i === 1 ? '<circle cx="59" cy="47" r="9" stroke="#3a3a3a" stroke-width="8"/><circle cx="162" cy="47" r="9" stroke="#3a3a3a" stroke-width="8"/>' : '<path d="M14 8h50v75H14zM155 8h50v75h-50z" fill="#1b1b1c"/>'}<rect x="68" y="5" width="83" height="78" fill="#1d1f22" stroke="#26282c"/>${i === 1 ? '<circle cx="109.500" cy="47" r="13.500" stroke="#555557" stroke-width="14"/><circle cx="109.500" cy="47" r="4" fill="#66676a"/>' : ''}</svg>
  <div class="h-[36px] pt-px bg-[#222327] flex items-center justify-center"><span data-w="${w}">${t}</span></div></div>`).join('');

// taskbar
const ic = {
  win: svg(16,14,'<path d="M0 2l6-1v6H0zM7 1l8-1v7H7zM0 8h6v5l-6-1zM7 8h8v6l-8-1z" fill="#fff"/>'),
  folder: svg(18,16,'<path d="M1 1h6l2 2h8v12H1z" fill="#f0d878"/><path d="M1 5h16v4H1z" fill="#fbeeb0"/><path d="M4 16v-4q0-3 5-3t5 3v4h-3v-4H7v4z" fill="#5db4e6"/>'),
  chrome: svg(16,16,'<circle cx="8" cy="8" r="7.500" fill="#fc4"/><path d="M8 8L1.500 4A7.500 7.500 0 0 1 15 5H8z" fill="#db4437"/><path d="M8 8l-6.500-4a7.500 7.500 0 0 0 6 11.500L11 10z" fill="#1da462"/><circle cx="8" cy="8" r="3.200" fill="#4285f4" stroke="#fff" stroke-width="1.200"/>'),
  spotify: svg(17,17,'<circle cx="8.500" cy="8.500" r="8" fill="#1ed760"/><path d="M3.500 6q5-1.500 10 1M4 9q4.500-1 8.500 1M4.500 11.800q4-.8 7 .8" stroke="#163" stroke-width="1.500"/>'),
  steam: svg(16,16,'<circle cx="9" cy="7" r="6.500" fill="#8d9dbb"/><path d="M0 3l5-1 3 3-2 6-4-2z" fill="#c9d3e6"/><path d="M2 4l3 1-1 4zM8 8l7-4v5l-5 5z" fill="#182a55"/><path d="M8 2l4 1-3 4z" fill="#fff"/><path d="M5 12l4 3 3-2-4-3z" fill="#222c44"/>'),
  ps: svg(16,16,'<rect x=".75" y=".75" width="14.500" height="14.500" fill="#06203a" stroke="#5cc3f3" stroke-width="1.500"/><text x="3.500" y="11.500" font-size="8.500" font-weight="700" fill="#6fcdf8" font-family="Noto Sans">Ps</text>'),
  bird: svg(16,16,'<circle cx="8" cy="8" r="7" fill="#1c4f96"/><path d="M3 3q5-4 9 0 3 4 0 9" stroke="#6bb1ee" stroke-width="2"/><ellipse cx="7" cy="9.500" rx="4.500" ry="3.500" fill="#eee"/><path d="M3 8l4 3 4-2" stroke="#a65"/>'),
  skype: svg(17,17,'<circle cx="8.500" cy="8.500" r="6.500" fill="#00aff0"/><circle cx="5" cy="5" r="4" fill="#00aff0"/><circle cx="12" cy="12" r="4" fill="#00aff0"/><text x="4.500" y="13" font-size="12" font-weight="800" fill="#fff" font-family="Lato">S</text>'),
  qt: svg(17,16,'<path d="M1 1h12v14H1z" fill="#3d8c1f"/><path d="M1 1h3v14H1z" fill="#8bc63e"/><text x="4" y="11" font-size="9" font-weight="700" fill="#fff" textLength="9" lengthAdjust="spacingAndGlyphs">Qt</text><path d="M8 15L15 7l2 2-7 7z" fill="#e8dc50"/>'),
  sub: svg(15,15,'<rect x=".75" y=".75" width="13.500" height="13.500" rx="1" fill="#eee" stroke="#222"/><rect x="2" y="2" width="11" height="9" fill="#4a3c30"/><text x="4.500" y="10" font-size="8" font-weight="700" fill="#f0a030">S</text>'),
  maya: '<svg width="16" height="16"><use href="#maya"/></svg>',
  pad: svg(16,16,'<path d="M3 6l6-4 4 9-7 4z" fill="#ddd"/><path d="M5 5l4 9M7 4l3 8" stroke="#a33"/><path d="M13 1L8 14" stroke="#222" stroke-width="2"/>')
};
const task = (n, open, stack) => open
  ? `<div class="shrink-0 w-[42px] h-[29px] flex"><div class="flex-1 h-[28px] border flex items-center justify-center ${n === 'maya' ? 'bg-[#a9a8aa] border-white' : 'bg-[#858286] border-[#b0aeb0]'}">${ic[n]}</div>${stack ? `<div class="w-1 h-[28px] border border-l-0 ${n === 'maya' ? 'border-white bg-[#999]' : 'border-[#a5a3a5] bg-[#777]'}"></div>` : ''}${stack > 1 ? '<div class="w-1 h-[28px] border border-l-0 border-white bg-[#888]"></div>' : ''}</div>`
  : `<div class="shrink-0 w-[42px] h-[28px] flex items-center justify-center">${ic[n]}</div>`;
const apps = task('spotify',1) + task('steam') + task('ps') + task('bird') + task('skype',1) + task('qt',1,1) + task('sub',1) + task('maya',1,2) + task('pad',1);
$('task-left').innerHTML = apps;
$('task-right').innerHTML = '<div class="-ml-1 w-[42px] h-[28px] flex items-center justify-center pl-[6px] shrink-0">' + ic.win + '</div>' + task('folder') + task('chrome',1) + apps;

document.querySelectorAll('.drop').forEach(e => { e.className = 'ml-auto w-[15px] h-full border-l border-[#1e1e1e] flex items-center justify-center'; e.innerHTML = svg(8, 5, '<path d="M0 0h8L4 5z" fill="#eee"/>'); });

// tune tracking so each label takes its nominal width; rerun whenever styles or fonts settle
const spans = [...document.querySelectorAll('[data-w]')];
spans.forEach(e => e.classList.add('inline-block', 'shrink-0'));
function fit() {
  spans.forEach(e => { e.style.letterSpacing = '0px'; });
  const natural = spans.map(e => { const r = document.createRange(); r.selectNodeContents(e); return r.getBoundingClientRect().width; });
  spans.forEach((e, i) => { e.style.letterSpacing = ((+e.dataset.w - natural[i]) / e.textContent.length).toFixed(3) + 'px'; });
}
new ResizeObserver(fit).observe(document.body);
addEventListener('load', () => { fit(); requestAnimationFrame(fit); document.fonts.ready.then(fit); });
[30, 100, 250].forEach(t => setTimeout(fit, t));
</script>
</body>
</html>
